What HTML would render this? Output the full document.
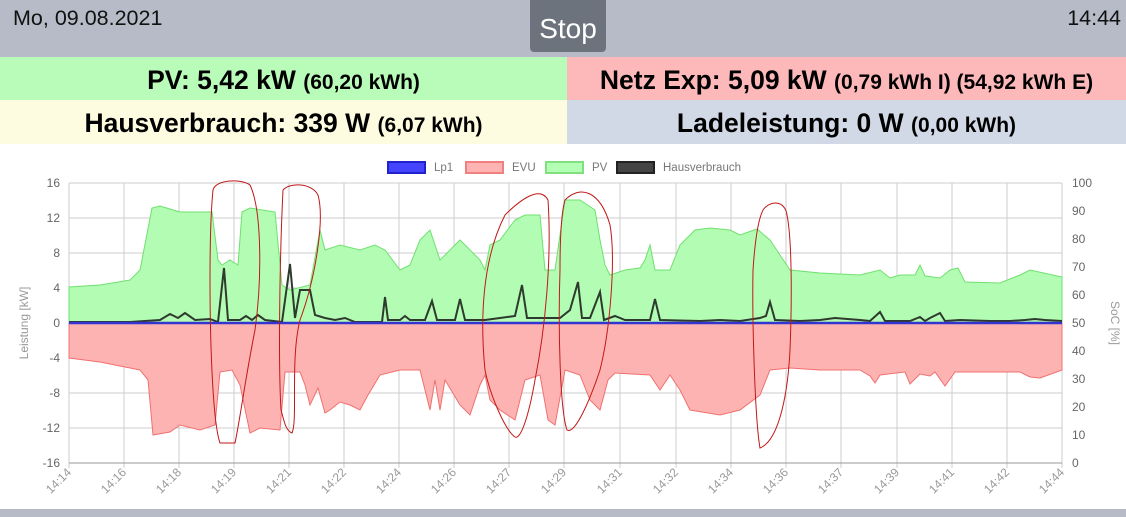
<!DOCTYPE html>
<html><head><meta charset="utf-8"><style>
*{margin:0;padding:0;box-sizing:border-box}
body{width:1126px;height:517px;overflow:hidden;background:#fff;font-family:"Liberation Sans",sans-serif;position:relative}
.hdr{position:absolute;left:0;top:0;width:1126px;height:57px;background:#b6bbc7}
.date{position:absolute;left:13px;top:6px;font-size:21.5px;color:#111}
.time{position:absolute;right:5px;top:6px;font-size:21.5px;color:#111}
.stop{position:absolute;left:530px;top:0;width:76px;height:52px;background:#6c737c;border-radius:0 0 4px 4px;color:#fff;font-size:28px;text-align:center;line-height:58px}
.cell{position:absolute;height:44px;font-weight:bold;font-size:26.5px;text-align:center;line-height:46px;color:#000;white-space:nowrap}
.cell small{font-size:21px}
.bot{position:absolute;left:0;top:509px;width:1126px;height:8px;background:#b6bbc7}
</style></head><body>
<div class="hdr"><div class="date">Mo, 09.08.2021</div><div class="stop">Stop</div><div class="time">14:44</div></div>
<div class="cell" style="left:0;top:57px;width:567px;background:#b9fbb9">PV: 5,42 kW <small>(60,20 kWh)</small></div>
<div class="cell" style="left:567px;top:57px;width:559px;background:#fdb9b9">Netz Exp: 5,09 kW <small>(0,79 kWh I) (54,92 kWh E)</small></div>
<div class="cell" style="left:0;top:100px;width:567px;height:44px;background:#fefce0">Hausverbrauch: 339 W <small>(6,07 kWh)</small></div>
<div class="cell" style="left:567px;top:100px;width:559px;height:44px;background:#d2d9e6">Ladeleistung: 0 W <small>(0,00 kWh)</small></div>
<svg style="position:absolute;left:0;top:144px" width="1126" height="365" viewBox="0 144 1126 365" font-family="Liberation Sans, sans-serif">
<g font-size="11.5" fill="#777">
<rect x="388" y="162" width="37" height="11" fill="#4444ff" stroke="#2222cc" stroke-width="2"/><text x="434" y="171">Lp1</text>
<rect x="466" y="162" width="37" height="11" fill="#ffb3b3" stroke="#f08080" stroke-width="2"/><text x="512" y="171">EVU</text>
<rect x="546" y="162" width="37" height="11" fill="#b3ffb3" stroke="#80e080" stroke-width="2"/><text x="592" y="171">PV</text>
<rect x="617" y="162" width="37" height="11" fill="#444" stroke="#222" stroke-width="2"/><text x="663" y="171">Hausverbrauch</text>
</g>
<g stroke="#ccc" stroke-width="1">
<line x1="69" y1="183" x2="1062" y2="183"/><line x1="69" y1="218" x2="1062" y2="218"/><line x1="69" y1="253" x2="1062" y2="253"/><line x1="69" y1="288" x2="1062" y2="288"/><line x1="69" y1="358" x2="1062" y2="358"/><line x1="69" y1="393" x2="1062" y2="393"/><line x1="69" y1="428" x2="1062" y2="428"/>
</g>
<g stroke="#ccc">
<line x1="69" y1="183" x2="69" y2="468"/><line x1="124" y1="183" x2="124" y2="468"/><line x1="179" y1="183" x2="179" y2="468"/><line x1="234" y1="183" x2="234" y2="468"/><line x1="289" y1="183" x2="289" y2="468"/><line x1="344" y1="183" x2="344" y2="468"/><line x1="399" y1="183" x2="399" y2="468"/><line x1="454" y1="183" x2="454" y2="468"/><line x1="509" y1="183" x2="509" y2="468"/><line x1="564" y1="183" x2="564" y2="468"/><line x1="620" y1="183" x2="620" y2="468"/><line x1="676" y1="183" x2="676" y2="468"/><line x1="731" y1="183" x2="731" y2="468"/><line x1="786" y1="183" x2="786" y2="468"/><line x1="841" y1="183" x2="841" y2="468"/><line x1="897" y1="183" x2="897" y2="468"/><line x1="952" y1="183" x2="952" y2="468"/><line x1="1007" y1="183" x2="1007" y2="468"/><line x1="1062" y1="183" x2="1062" y2="468"/>
</g>
<polygon fill="#b3fcb3" stroke="#6fe06f" stroke-width="1" points="69,323 69,287 100,285 130,280 140,270 152,208 160,206 180,212 212,212 218,260 222,265 230,260 238,265 242,212 250,208 275,212 282,285 290,290 310,285 320,230 325,250 340,245 360,250 375,245 385,250 400,270 410,265 420,240 430,230 440,260 450,250 460,240 470,250 480,260 485,270 490,245 500,240 515,220 525,215 540,215 545,270 555,270 565,200 580,200 595,210 600,240 605,265 610,275 625,270 640,268 645,260 650,245 655,270 670,270 680,245 695,230 710,228 730,230 740,235 757,229 770,240 780,255 790,270 820,273 860,275 880,270 890,278 900,275 915,275 920,265 925,276 940,278 950,270 958,268 965,282 1000,283 1020,275 1030,270 1062,277 1062,323"/>
<polygon fill="#feb3b3" stroke="#f07070" stroke-width="1" points="69,323 69,358 100,362 140,370 148,380 153,435 170,432 180,425 200,430 215,425 220,372 232,370 240,385 250,433 260,428 280,430 285,372 300,372 305,385 310,405 318,388 325,413 330,410 340,402 350,405 360,410 368,395 380,375 400,370 420,370 425,390 430,410 435,380 440,410 445,380 460,405 470,415 480,385 485,375 490,400 500,410 515,420 520,400 525,380 540,375 548,420 555,425 565,370 580,375 590,400 600,410 608,380 615,373 650,375 660,390 670,375 680,390 690,410 720,415 740,410 760,395 770,370 790,368 820,370 860,370 870,376 875,383 880,375 905,372 910,384 920,374 930,376 935,372 945,386 955,372 1000,372 1020,372 1030,377 1040,378 1062,370 1062,323"/>
<polyline fill="none" stroke="#2d3a2d" stroke-width="2" points="69,322 100,322 130,322 160,320 170,314 178,318 185,313 195,320 210,319 218,322 224,268 228,320 240,320 246,316 252,320 258,315 265,320 282,322 290,264 295,318 300,290 310,290 315,315 325,318 335,320 345,318 355,322 382,322 385,297 388,320 400,320 405,316 410,320 425,320 432,301 437,320 455,320 460,299 465,320 485,320 500,318 515,316 522,285 527,318 545,318 560,318 570,310 578,282 582,318 590,318 600,292 604,320 615,316 625,320 650,320 655,299 660,320 700,321 720,320 740,321 760,318 766,316 770,302 775,320 800,321 820,320 835,318 860,320 870,321 880,312 885,321 910,321 920,317 925,321 930,318 940,313 945,321 960,320 990,321 1010,321 1025,320 1035,319 1045,320 1062,321"/>
<line x1="69" y1="323" x2="1062" y2="323" stroke="#3434d0" stroke-width="2.5"/>
<line x1="69" y1="463" x2="1062" y2="463" stroke="#999"/>
<g fill="none" stroke="#c01818" stroke-width="1">
<path d="M213,190 C215,180 240,178 250,185 C262,210 262,280 255,330 C245,380 240,420 235,443 L220,443 C212,420 210,330 210,280 C210,230 212,200 213,190"/>
<path d="M283,190 C290,182 312,183 318,195 C325,220 315,280 300,320 C290,360 298,420 292,433 C285,430 284,420 281,410 C278,360 280,250 283,190"/>
<path d="M505,215 C520,200 540,185 548,200 C552,260 545,330 535,380 C528,420 520,440 515,437 C505,430 490,395 485,370 C480,320 482,260 505,215"/>
<path d="M565,200 C580,185 600,190 610,225 C616,260 610,330 600,370 C590,400 575,435 567,430 C560,410 558,330 560,270 C560,230 562,210 565,200"/>
<path d="M763,210 C770,200 785,200 787,215 C792,240 792,300 790,350 C788,390 780,440 760,448 C755,420 752,320 753,270 C755,240 758,220 763,210"/>
</g>
<g font-size="12" fill="#666" text-anchor="end">
<text x="60" y="187">16</text><text x="60" y="222">12</text><text x="60" y="257">8</text><text x="60" y="292">4</text><text x="60" y="327">0</text><text x="60" y="362">-4</text><text x="60" y="397">-8</text><text x="60" y="432">-12</text><text x="60" y="467">-16</text>
</g>
<g font-size="12" fill="#666">
<text x="1072" y="187">100</text><text x="1072" y="215">90</text><text x="1072" y="243">80</text><text x="1072" y="271">70</text><text x="1072" y="299">60</text><text x="1072" y="327">50</text><text x="1072" y="355">40</text><text x="1072" y="383">30</text><text x="1072" y="411">20</text><text x="1072" y="439">10</text><text x="1072" y="467">0</text>
</g>
<text transform="translate(28,323) rotate(-90)" font-size="12" fill="#999" text-anchor="middle">Leistung [kW]</text>
<text transform="translate(1111,323) rotate(90)" font-size="12" fill="#999" text-anchor="middle">SoC [%]</text>
<g font-size="12" fill="#999" text-anchor="end">
<text transform="translate(72,473) rotate(-45)">14:14</text><text transform="translate(127,473) rotate(-45)">14:16</text><text transform="translate(182,473) rotate(-45)">14:18</text><text transform="translate(237,473) rotate(-45)">14:19</text><text transform="translate(292,473) rotate(-45)">14:21</text><text transform="translate(347,473) rotate(-45)">14:22</text><text transform="translate(402,473) rotate(-45)">14:24</text><text transform="translate(457,473) rotate(-45)">14:26</text><text transform="translate(512,473) rotate(-45)">14:27</text><text transform="translate(567,473) rotate(-45)">14:29</text><text transform="translate(623,473) rotate(-45)">14:31</text><text transform="translate(679,473) rotate(-45)">14:32</text><text transform="translate(734,473) rotate(-45)">14:34</text><text transform="translate(789,473) rotate(-45)">14:36</text><text transform="translate(844,473) rotate(-45)">14:37</text><text transform="translate(900,473) rotate(-45)">14:39</text><text transform="translate(955,473) rotate(-45)">14:41</text><text transform="translate(1010,473) rotate(-45)">14:42</text><text transform="translate(1065,473) rotate(-45)">14:44</text>
</g>
</svg>
<div class="bot"></div>
</body></html>
